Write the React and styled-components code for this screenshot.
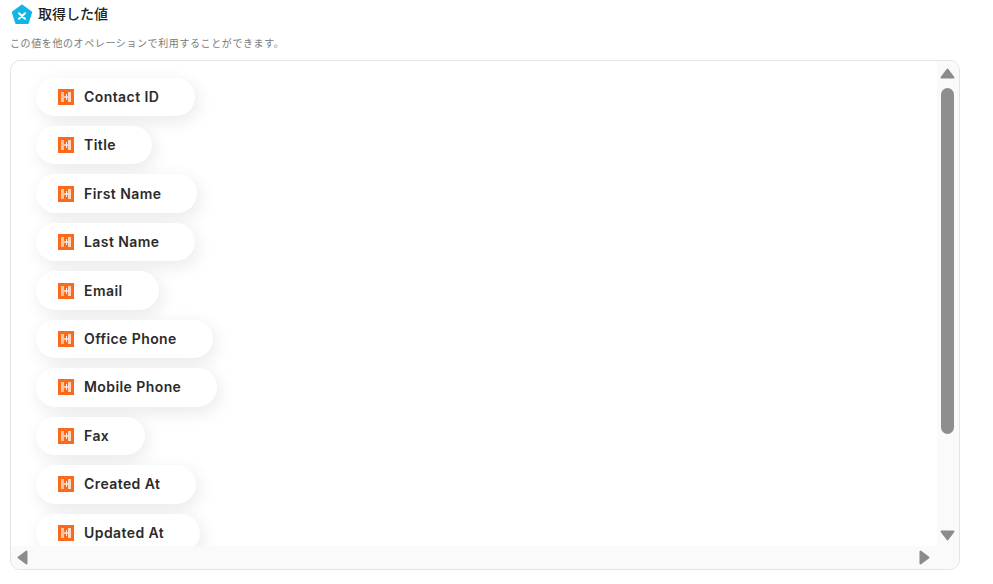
import React from 'react'
import styled, { createGlobalStyle } from 'styled-components'

const GlobalStyle = createGlobalStyle`
  html, body {
    margin: 0;
    padding: 0;
    background: #fff;
  }
  body {
    font-family: Inter, "Noto Sans CJK JP", sans-serif;
  }
`

const Page = styled.div`
  width: 993px;
  height: 584px;
  box-sizing: border-box;
  padding: 4px 33px 14px 10px;
  display: flex;
  flex-direction: column;
  overflow: hidden;
`

const Header = styled.div`
  display: flex;
  align-items: center;
  gap: 5px;
  height: 22px;
  padding-left: 1px;
`

const Title = styled.h2`
  margin: 0;
  font-family: "Noto Sans CJK JP", sans-serif;
  font-size: 14px;
  line-height: 20px;
  font-weight: 500;
  color: #222;
  position: relative;
  top: -2px;
`

const Hint = styled.p`
  margin: 10px 0 10px;
  font-family: "Noto Sans CJK JP", sans-serif;
  font-size: 10px;
  letter-spacing: 0.6px;
  line-height: 14px;
  color: #7a7a7a;
`

const Box = styled.div`
  flex: 1;
  min-height: 0;
  border: 1px solid #e4e4e4;
  border-radius: 10px;
  display: grid;
  grid-template-columns: 1fr 22px;
  grid-template-rows: 1fr 23px;
  overflow: hidden;
`

const List = styled.div`
  overflow: hidden;
  padding: 16.6px 0 0 25px;
  display: flex;
  flex-direction: column;
  align-items: flex-start;
  gap: 10px;
`

const Chip = styled.div`
  flex: none;
  height: 38.44px;
  box-sizing: border-box;
  display: flex;
  align-items: center;
  gap: 10px;
  padding: 0 36px 1px 22px;
  background: #fff;
  border-radius: 20px;
  box-shadow: 3px 5px 18px rgba(0, 0, 0, 0.09);
  font-size: 14px;
  font-weight: 600;
  letter-spacing: 0.42px;
  color: #2b2b2b;
  white-space: nowrap;
`

const Logo = styled.svg`
  flex: none;
  margin-top: 1px;
`

const VTrack = styled.div`
  background: #fafafa;
  display: flex;
  flex-direction: column;
  align-items: center;
  padding: 7px 2px 5px 0;
`

const VThumb = styled.div`
  width: 13px;
  height: 346px;
  margin-top: 9px;
  background: #8e8e8e;
  border-radius: 7px;
`

const HTrack = styled.div`
  background: #fafafa;
  display: flex;
  align-items: center;
  justify-content: space-between;
  padding: 0 7px 1px 6px;
`

const Corner = styled.div`
  background: #fafafa;
`

const Spacer = styled.div`
  flex: 1;
`

const Arrow = styled.svg`
  display: block;
  flex: none;
  fill: #8b8b8b;
  stroke: #8b8b8b;
  stroke-width: 2;
  stroke-linejoin: round;
`

const Up = () => (
  <Arrow width="15" height="11" viewBox="0 0 15 11"><path d="M7.5 1.5 L13.5 9.5 L1.5 9.5 Z" /></Arrow>
)
const Down = () => (
  <Arrow width="15" height="11" viewBox="0 0 15 11"><path d="M1.5 1.5 L13.5 1.5 L7.5 9.5 Z" /></Arrow>
)
const Left = () => (
  <Arrow width="11" height="15" viewBox="0 0 11 15"><path d="M9.5 1.5 L9.5 13.5 L1.5 7.5 Z" /></Arrow>
)
const Right = () => (
  <Arrow width="11" height="15" viewBox="0 0 11 15"><path d="M1.5 1.5 L1.5 13.5 L9.5 7.5 Z" /></Arrow>
)

const Badge = () => (
  <svg width="22" height="22" viewBox="0 0 22 22" style={{ flex: 'none' }}>
    <path
      d="M11 1.6 L20.2 8.2 L16.8 19 L5.2 19 L1.8 8.2 Z"
      fill="#12b5e5"
      stroke="#12b5e5"
      strokeWidth="2"
      strokeLinejoin="round"
    />
    <path d="M8 9.2 L14 14.8 M14 9.2 L8 14.8" stroke="#fff" strokeWidth="2" strokeLinecap="round" />
  </svg>
)

const AppLogo = () => (
  <Logo width="16" height="16" viewBox="0 0 16 16">
    <rect width="16" height="16" fill="#fb6a1c" />
    <rect x="3" y="3" width="3" height="10" fill="#ffc29e" />
    <rect x="10" y="3" width="3" height="10" fill="#ffd9c2" />
    <rect x="6" y="7" width="4" height="2" fill="#ffc9a6" />
    <rect x="8" y="5" width="1" height="6" fill="#ffe9dc" />
  </Logo>
)

const fields = [
  'Contact ID',
  'Title',
  'First Name',
  'Last Name',
  'Email',
  'Office Phone',
  'Mobile Phone',
  'Fax',
  'Created At',
  'Updated At'
]

export default function App() {
  return (
    <Page>
      <GlobalStyle />
      <Header>
        <Badge />
        <Title>取得した値</Title>
      </Header>
      <Hint>この値を他のオペレーションで利用することができます。</Hint>
      <Box>
        <List>
          {fields.map(name => (
            <Chip key={name}>
              <AppLogo />
              {name}
            </Chip>
          ))}
        </List>
        <VTrack>
          <Up />
          <VThumb />
          <Spacer />
          <Down />
        </VTrack>
        <HTrack>
          <Left />
          <Right />
        </HTrack>
        <Corner />
      </Box>
    </Page>
  )
}
